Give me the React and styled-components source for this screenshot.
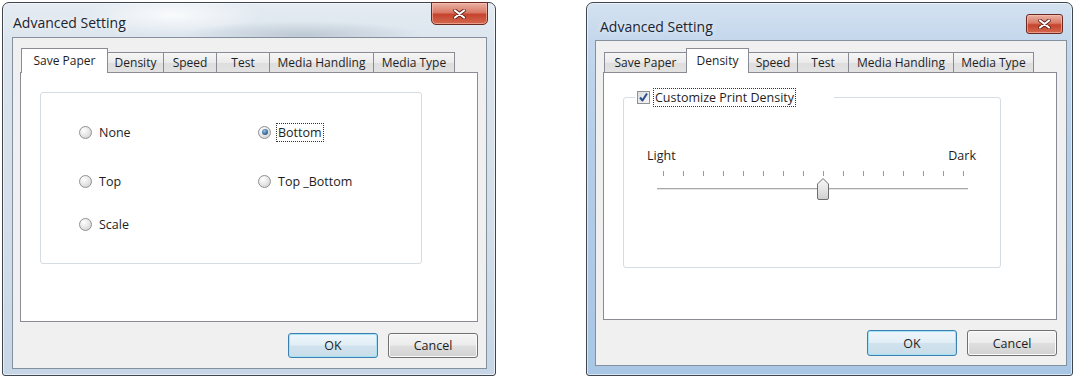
import React from 'react';
import styled, { createGlobalStyle, css } from 'styled-components';

const GlobalStyle = createGlobalStyle`
  html, body {
    margin: 0;
    padding: 0;
    background: #ffffff;
  }
  body {
    font-family: "Open Sans", "Noto Sans", "Liberation Sans", sans-serif;
    color: #1e1e1e;
  }
`;

const frames = {
  seven: {
    width: 494,
    title: 34,
    titlePad: '0 7px 0 10px',
    client: '0 8px 6px 9px',
    glass: `
      radial-gradient(ellipse 120px 14px at 300px 32px, rgba(150,165,180,0.45), transparent),
      radial-gradient(ellipse 90px 20px at 170px 12px, rgba(255,255,255,0.8), transparent),
      linear-gradient(180deg, #e4ebf2 0%, #dbe4ed 12%, #d3deea 60%, #c6d6e6 100%)`,
  },
  vista: {
    width: 487,
    title: 37,
    titlePad: '0 9px 0 13px',
    client: '0 5px 9px 8px',
    glass: `
      linear-gradient(180deg, #d4e2f1 0%, #c4d7ec 10%, #b4cde8 40%, #a9c6e5 100%)`,
  },
};

const Page = styled.div`
  width: 1077px;
  height: 378px;
  box-sizing: border-box;
  padding: 2px 0 0 2px;
  display: flex;
  align-items: flex-start;
  gap: 90px;
  background: #ffffff;
  overflow: hidden;
`;

const Window = styled.div`
  width: ${p => frames[p.$kind].width}px;
  height: 374px;
  box-sizing: border-box;
  border: 1px solid #3f464e;
  border-radius: 7px 7px 3px 3px;
  background: ${p => frames[p.$kind].glass};
  box-shadow: inset 0 0 0 1px rgba(255, 255, 255, 0.55);
  display: flex;
  flex-direction: column;
`;

const TitleBar = styled.div`
  height: ${p => frames[p.$kind].title}px;
  flex-shrink: 0;
  padding: ${p => frames[p.$kind].titlePad};
  display: flex;
  align-items: flex-start;
  justify-content: space-between;
`;

const Title = styled.div`
  font-size: 14px;
  line-height: 18px;
  color: #1b2430;
  margin-top: ${p => (p.$kind === 'seven' ? 11 : 15)}px;
  text-shadow: 0 0 6px rgba(255, 255, 255, 0.9);
`;

const CloseButton = styled.div`
  display: flex;
  align-items: center;
  justify-content: center;
  box-sizing: border-box;
  border: 1px solid #6a2a22;
  box-shadow: inset 0 0 0 1px rgba(255, 200, 190, 0.55);
  background: linear-gradient(180deg, #eab2a4 0%, #d97a66 45%, #c5432d 55%, #d4694f 100%);
  ${p =>
    p.$kind === 'seven'
      ? css`
          width: 57px;
          height: 23px;
          margin-top: -1px;
          border-radius: 0 0 5px 5px;
        `
      : css`
          width: 37px;
          height: 20px;
          margin-top: 11px;
          border-radius: 3px;
        `}
`;

const Client = styled.div`
  flex: 1;
  margin: ${p => frames[p.$kind].client};
  background: #f0f0f0;
  border: 1px solid #84909c;
  display: flex;
  flex-direction: column;
`;

const TabStrip = styled.div`
  display: flex;
  align-items: flex-end;
  padding: ${p => p.$top}px 0 0 8px;
  margin-bottom: -1px;
  position: relative;
  z-index: 1;
`;

const Tab = styled.div`
  width: ${p => p.$w}px;
  height: ${p => (p.$active ? 25 : 21)}px;
  box-sizing: border-box;
  margin-left: -1px;
  &:first-child {
    margin-left: 0;
  }
  border: 1px solid #898c95;
  border-bottom: ${p => (p.$active ? 'none' : '1px solid #898c95')};
  background: ${p =>
    p.$active ? '#ffffff' : 'linear-gradient(180deg, #f6f6f6 0%, #ebebeb 50%, #dedede 51%, #e2e2e2 100%)'};
  font-size: 12px;
  line-height: 16px;
  display: flex;
  align-items: center;
  justify-content: center;
  white-space: nowrap;
  position: relative;
  z-index: ${p => (p.$active ? 2 : 1)};
`;

const TabPanel = styled.div`
  height: ${p => p.$h}px;
  margin: 0 ${p => p.$right}px 0 7px;
  box-sizing: border-box;
  background: #ffffff;
  border: 1px solid #898c95;
  padding: ${p => p.$pad};
`;

const GroupBox = styled.div`
  width: 382px;
  height: 172px;
  box-sizing: border-box;
  border: 1px solid #d5dde3;
  border-radius: 3px;
  padding: 29px 0 0 38px;
  display: grid;
  grid-template-columns: 179px 1fr;
  grid-template-rows: 49px 43px 20px;
  grid-auto-flow: column;
`;

const Option = styled.div`
  height: 20px;
  display: flex;
  align-items: center;
  gap: 5px;
  font-size: 12.5px;
`;

const Radio = styled.span`
  width: 13px;
  height: 13px;
  box-sizing: border-box;
  border-radius: 50%;
  border: 1px solid #8f9194;
  background: radial-gradient(circle at 35% 30%, #ffffff 0%, #e6e6e6 50%, #c9c9c9 100%);
  position: relative;
  flex-shrink: 0;
  ${p =>
    p.$checked &&
    css`
      &::after {
        content: '';
        position: absolute;
        left: 2.5px;
        top: 2.5px;
        width: 6px;
        height: 6px;
        border-radius: 50%;
        background: radial-gradient(circle at 40% 35%, #9cc3e6 0%, #3a6d9e 55%, #1f466e 100%);
      }
    `}
`;

const Caption = styled.span`
  line-height: 17px;
  padding: 0 1px;
  border: 1px solid transparent;
  ${p =>
    p.$focus &&
    css`
      border: 1px dotted #333;
    `}
`;

const FieldSet = styled.fieldset`
  width: 378px;
  height: 180px;
  box-sizing: border-box;
  margin: 15px 0 0 0;
  padding: 0;
  border: 1px solid #d5dde3;
  border-radius: 3px;
`;

const Legend = styled.legend`
  margin-left: 11px;
  padding: 0 38px 0 2px;
  height: 18px;
  display: flex;
  align-items: center;
  gap: 3px;
  font-size: 12.5px;
`;

const CheckBox = styled.span`
  width: 13px;
  height: 13px;
  box-sizing: border-box;
  border: 1px solid #8f9194;
  background: linear-gradient(135deg, #dcdcdc 0%, #f6f6f6 100%);
  display: flex;
  align-items: center;
  justify-content: center;
`;

const SliderArea = styled.div`
  margin-top: 42px;
  padding: 0 24px 0 23px;
`;

const SliderLabels = styled.div`
  display: flex;
  justify-content: space-between;
  font-size: 12.5px;
  line-height: 16px;
`;

const SliderTrack = styled.svg`
  display: block;
  margin: 5px 0 0 8px;
`;

const ButtonRow = styled.div`
  display: flex;
  justify-content: flex-end;
  gap: 10px;
  margin: ${p => p.$top}px ${p => p.$right}px 0 0;
`;

const Button = styled.div`
  width: 90px;
  height: ${p => p.$h}px;
  box-sizing: border-box;
  border-radius: 3px;
  font-size: 12.5px;
  display: flex;
  align-items: center;
  justify-content: center;
  ${p =>
    p.$primary
      ? css`
          border: 1px solid #3c7fb1;
          box-shadow: inset 0 0 0 1px #a6e2f6;
          background: linear-gradient(180deg, #eef6fb 0%, #e2eef6 48%, #d0e2ee 52%, #c9dde9 100%);
        `
      : css`
          border: 1px solid #707070;
          box-shadow: inset 0 0 0 1px #fbfbfb;
          background: linear-gradient(180deg, #f4f4f4 0%, #ececec 48%, #dedede 52%, #d2d2d2 100%);
        `}
`;

function CloseGlyph() {
  return (
    <svg width="13" height="10" viewBox="0 0 13 10">
      <path d="M2 1.5 L11 8.5 M11 1.5 L2 8.5" stroke="#5a1d15" strokeWidth="3.6" strokeLinecap="round" />
      <path d="M2 1.5 L11 8.5 M11 1.5 L2 8.5" stroke="#ffffff" strokeWidth="2.2" strokeLinecap="round" />
    </svg>
  );
}

function Check() {
  return (
    <svg width="11" height="11" viewBox="0 0 11 11">
      <path d="M2 5.5 L4.5 8.5 L9 1.5" fill="none" stroke="#2b4f8f" strokeWidth="2" strokeLinejoin="round" />
    </svg>
  );
}

function Slider() {
  const ticks = Array.from({ length: 16 }, (_, i) => 8.5 + i * 20);
  return (
    <SliderTrack width="315" height="33" viewBox="0 0 315 33">
      {ticks.map(x => (
        <line key={x} x1={x} y1="2" x2={x} y2="7" stroke="#9a9a9a" strokeWidth="1" />
      ))}
      <line x1="2" y1="19.5" x2="313" y2="19.5" stroke="#a8a8a8" strokeWidth="1" />
      <line x1="2" y1="20.5" x2="313" y2="20.5" stroke="#e6e6e6" strokeWidth="1" />
      <defs>
        <linearGradient id="thumb" x1="0" y1="0" x2="0" y2="1">
          <stop offset="0" stopColor="#f7f7f7" />
          <stop offset="0.5" stopColor="#e6e6e6" />
          <stop offset="1" stopColor="#cfcfcf" />
        </linearGradient>
      </defs>
      <path
        d="M162.5 29 L162.5 15 L168 9.5 L173.5 15 L173.5 29 Q173.5 30.5 172 30.5 L164 30.5 Q162.5 30.5 162.5 29 Z"
        fill="url(#thumb)"
        stroke="#6f6f6f"
        strokeWidth="1"
      />
    </SliderTrack>
  );
}

const tabsSeven = [
  { label: 'Save Paper', w: 87 },
  { label: 'Density', w: 57 },
  { label: 'Speed', w: 54 },
  { label: 'Test', w: 54 },
  { label: 'Media Handling', w: 105 },
  { label: 'Media Type', w: 82 },
];

const tabsVista = [
  { label: 'Save Paper', w: 83 },
  { label: 'Density', w: 63 },
  { label: 'Speed', w: 50 },
  { label: 'Test', w: 52 },
  { label: 'Media Handling', w: 106 },
  { label: 'Media Type', w: 81 },
];

function Tabs({ items, active, top }) {
  return (
    <TabStrip $top={top}>
      {items.map(t => (
        <Tab key={t.label} $w={t.w} $active={t.label === active}>
          {t.label}
        </Tab>
      ))}
    </TabStrip>
  );
}

function SavePaperDialog() {
  return (
    <Window $kind="seven">
      <TitleBar $kind="seven">
        <Title $kind="seven">Advanced Setting</Title>
        <CloseButton $kind="seven">
          <CloseGlyph />
        </CloseButton>
      </TitleBar>
      <Client $kind="seven">
        <Tabs items={tabsSeven} active="Save Paper" top={10} />
        <TabPanel $h={250} $right={8} $pad="19px 0 0 19px">
          <GroupBox>
            <Option>
              <Radio />
              <Caption>None</Caption>
            </Option>
            <Option>
              <Radio />
              <Caption>Top</Caption>
            </Option>
            <Option>
              <Radio />
              <Caption>Scale</Caption>
            </Option>
            <Option>
              <Radio $checked />
              <Caption $focus>Bottom</Caption>
            </Option>
            <Option>
              <Radio />
              <Caption>Top _Bottom</Caption>
            </Option>
          </GroupBox>
        </TabPanel>
        <ButtonRow $top={11} $right={8}>
          <Button $primary $h={25}>OK</Button>
          <Button $h={25}>Cancel</Button>
        </ButtonRow>
      </Client>
    </Window>
  );
}

function DensityDialog() {
  return (
    <Window $kind="vista">
      <TitleBar $kind="vista">
        <Title $kind="vista">Advanced Setting</Title>
        <CloseButton $kind="vista">
          <CloseGlyph />
        </CloseButton>
      </TitleBar>
      <Client $kind="vista">
        <Tabs items={tabsVista} active="Density" top={7} />
        <TabPanel $h={248} $right={9} $pad="0 0 0 19px">
          <FieldSet>
            <Legend>
              <CheckBox>
                <Check />
              </CheckBox>
              <Caption $focus>Customize Print Density</Caption>
            </Legend>
            <SliderArea>
              <SliderLabels>
                <span>Light</span>
                <span>Dark</span>
              </SliderLabels>
              <Slider />
            </SliderArea>
          </FieldSet>
        </TabPanel>
        <ButtonRow $top={10} $right={9}>
          <Button $primary $h={26}>OK</Button>
          <Button $h={26}>Cancel</Button>
        </ButtonRow>
      </Client>
    </Window>
  );
}

export default function App() {
  return (
    <>
      <GlobalStyle />
      <Page>
        <SavePaperDialog />
        <DensityDialog />
      </Page>
    </>
  );
}
